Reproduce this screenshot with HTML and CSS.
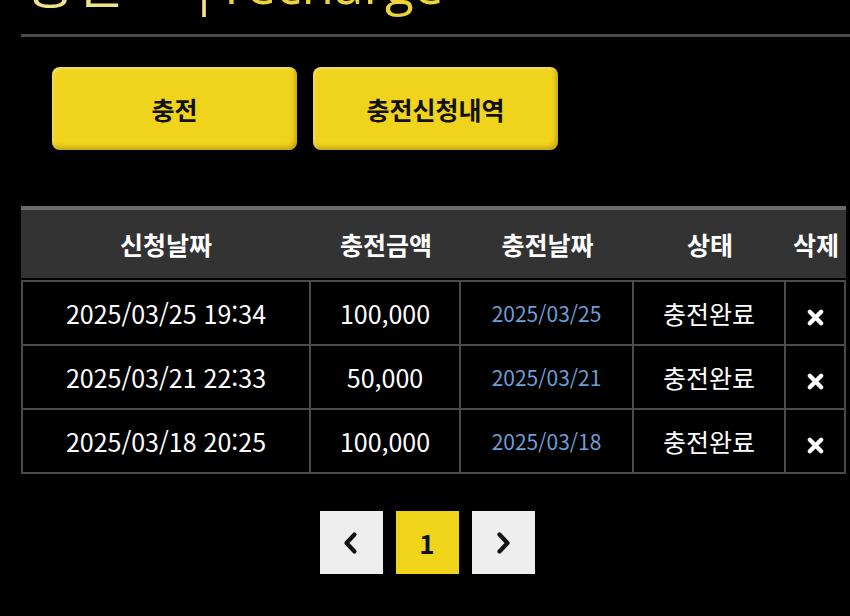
FILE: index.html
```html
<!DOCTYPE html>
<html lang="ko">
<head>
    <meta charset="UTF-8">
    <meta name="viewport" content="width=device-width, initial-scale=1.0">
    <title>충전 신청내역</title>
    <link rel="stylesheet" href="styles.css">
</head>
<body>

    <div class="wrap">
        <h2 class="title"><span class="ko">충전</span><span class="sep">|</span><span class="en">recharge</span></h2>

        <div class="tabs">
            <a class="tab-btn" href="#">충전</a>
            <a class="tab-btn" href="#">충전신청내역</a>
        </div>

        <table class="history">
            <colgroup>
                <col class="c-req">
                <col class="c-amt">
                <col class="c-date">
                <col class="c-state">
                <col class="c-del">
            </colgroup>
            <thead>
                <tr>
                    <th>신청날짜</th>
                    <th>충전금액</th>
                    <th>충전날짜</th>
                    <th>상태</th>
                    <th>삭제</th>
                </tr>
            </thead>
            <tbody>
                <tr>
                    <td>2025/03/25 19:34</td>
                    <td>100,000</td>
                    <td class="done-date">2025/03/25</td>
                    <td>충전완료</td>
                    <td><a class="del" href="#"><svg viewBox="0 0 20 20" width="19" height="19"><path d="M4 4L16 16M16 4L4 16" stroke="#fff" stroke-width="4.6" stroke-linecap="round"/></svg></a></td>
                </tr>
                <tr>
                    <td>2025/03/21 22:33</td>
                    <td>50,000</td>
                    <td class="done-date">2025/03/21</td>
                    <td>충전완료</td>
                    <td><a class="del" href="#"><svg viewBox="0 0 20 20" width="19" height="19"><path d="M4 4L16 16M16 4L4 16" stroke="#fff" stroke-width="4.6" stroke-linecap="round"/></svg></a></td>
                </tr>
                <tr>
                    <td>2025/03/18 20:25</td>
                    <td>100,000</td>
                    <td class="done-date">2025/03/18</td>
                    <td>충전완료</td>
                    <td><a class="del" href="#"><svg viewBox="0 0 20 20" width="19" height="19"><path d="M4 4L16 16M16 4L4 16" stroke="#fff" stroke-width="4.6" stroke-linecap="round"/></svg></a></td>
                </tr>
            </tbody>
        </table>

        <div class="pager">
            <a class="pg" href="#"><svg viewBox="0 0 24 24" width="24" height="24"><path d="M15.5 3.5L7.5 12L15.5 20.5" fill="none" stroke="#111" stroke-width="4.2" stroke-linecap="round" stroke-linejoin="round"/></svg></a>
            <a class="pg on" href="#">1</a>
            <a class="pg" href="#"><svg viewBox="0 0 24 24" width="24" height="24"><path d="M8.5 3.5L16.5 12L8.5 20.5" fill="none" stroke="#111" stroke-width="4.2" stroke-linecap="round" stroke-linejoin="round"/></svg></a>
        </div>
    </div>

</body>
</html>
```

FILE: styles.css
```css
* {
    margin: 0;
    padding: 0;
    box-sizing: border-box;
}

body {
    background: #000;
    font-family: "Noto Sans CJK KR", "Noto Sans", sans-serif;
    color: #fff;
    overflow: hidden;
}

a {
    text-decoration: none;
}

.wrap {
    padding-left: 21px;
}

.title {
    display: flex;
    align-items: baseline;
    margin-top: -51px;
    padding-left: 5px;
    padding-bottom: 18px;
    font-family: "Open Sans", "Noto Sans CJK KR", sans-serif;
    font-size: 53px;
    font-weight: normal;
    line-height: 64px;
    white-space: nowrap;
    border-bottom: 3px solid #4a4a4a;
}

.title .ko {
    color: #efe38a;
    font-family: "Noto Sans CJK KR", sans-serif;
}

.title .sep {
    margin: 0 6px 0 66px;
    color: #efe38a;
}

.title .en {
    color: #ecd43a;
}

.tabs {
    display: flex;
    gap: 16px;
    margin-top: 30px;
    padding-left: 31px;
}

.tab-btn {
    display: flex;
    align-items: center;
    justify-content: center;
    width: 245px;
    height: 83px;
    background: #f0d31c;
    border-radius: 8px;
    color: #111;
    font-size: 25px;
    font-weight: bold;
    box-shadow: inset 2px 2px 3px rgba(255, 255, 255, 0.3), inset -2px -3px 4px rgba(130, 100, 0, 0.4);
}

.history {
    width: 825px;
    margin-top: 56px;
    border-collapse: separate;
    border-spacing: 0;
    table-layout: fixed;
}

.c-req { width: 290px; }
.c-amt { width: 150px; }
.c-date { width: 173px; }
.c-state { width: 152px; }
.c-del { width: 60px; }

.history th {
    height: 74px;
    background: #333;
    border-top: 4px solid #6b6b6b;
    border-bottom: 2px solid #000;
    font-size: 25px;
    font-weight: bold;
}

.history td {
    height: 64px;
    text-align: center;
    font-size: 25px;
    border-right: 2px solid #4b4b4b;
    border-bottom: 2px solid #4b4b4b;
}

.history td:first-child {
    border-left: 2px solid #4b4b4b;
}

.history tbody tr:first-child td {
    height: 66px;
    border-top: 2px solid #4b4b4b;
}

.history td.done-date {
    color: #6c9fd6;
    font-size: 21px;
}

.del {
    display: inline-flex;
    vertical-align: middle;
}

.pager {
    display: flex;
    justify-content: center;
    gap: 13px;
    margin-top: 37px;
    margin-left: -17px;
}

.pg {
    display: flex;
    align-items: center;
    justify-content: center;
    width: 63px;
    height: 63px;
    background: #eeeeee;
    color: #111;
    font-size: 26px;
    font-weight: bold;
}

.pg.on {
    background: #f0d41a;
}
```
